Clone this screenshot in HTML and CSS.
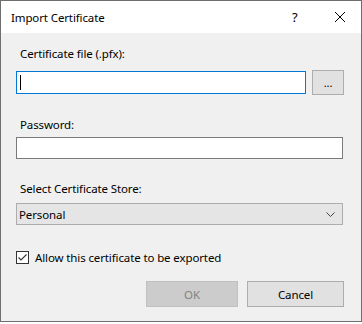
FILE: index.html
```html
<!DOCTYPE html>
<html lang="en">
<head>
    <meta charset="UTF-8">
    <meta name="viewport" content="width=device-width, initial-scale=1.0">
    <title>Import Certificate</title>
    <link rel="stylesheet" href="styles.css">
</head>
<body>
    <div class="window">
        <div class="titlebar">
            <span class="title">Import Certificate</span>
            <span class="help">?</span>
            <span class="close">
                <svg width="12" height="12" viewBox="0 0 12 12">
                    <path d="M1 1 L11 11 M11 1 L1 11" stroke="#000" stroke-width="1" fill="none"/>
                </svg>
            </span>
        </div>
        <div class="content">
            <label class="field-label">Certificate file (.pfx):</label>
            <div class="file-row">
                <div class="textbox focused"><span class="caret"></span></div>
                <button class="btn browse">...</button>
            </div>

            <label class="field-label gap">Password:</label>
            <div class="textbox wide"></div>

            <label class="field-label gap">Select Certificate Store:</label>
            <div class="select">
                <span>Personal</span>
                <svg width="9" height="5" viewBox="0 0 9 5">
                    <polyline points="0.5,0.5 4.5,4.5 8.5,0.5" stroke="#444" stroke-width="1" fill="none"/>
                </svg>
            </div>

            <div class="check-row">
                <span class="checkbox">
                    <svg width="11" height="11" viewBox="0 0 11 11">
                        <polyline points="1.5,5.5 4,8 9.5,2.5" stroke="#333" stroke-width="1.1" fill="none"/>
                    </svg>
                </span>
                <span>Allow this certificate to be exported</span>
            </div>

            <div class="buttons">
                <button class="btn ok" disabled>OK</button>
                <button class="btn cancel">Cancel</button>
            </div>
        </div>
    </div>
</body>
</html>
```

FILE: styles.css
```css
body {
    margin: 0;
    background-color: #fff;
    font-family: "Noto Sans", "Open Sans", sans-serif;
    font-size: 11.5px;
    letter-spacing: -0.12px;
    color: #000;
}
.window {
    width: 360px;
    height: 320px;
    border: 1px solid #6f6f6f;
    background-color: #f0f0f0;
}
.titlebar {
    height: 32px;
    background-color: #fff;
    display: flex;
    align-items: center;
    padding-left: 10px;
}
.title {
    flex: 1;
}
.help {
    width: 20px;
    font-size: 13px;
    margin-right: 22px;
}
.close {
    width: 27px;
    display: flex;
}
.content {
    padding: 13px 17px 0 15px;
}
.field-label {
    display: block;
    line-height: 16px;
    padding-left: 4px;
}
.field-label.gap {
    margin-top: 22px;
}
.file-row {
    display: flex;
    align-items: center;
    margin-top: 8px;
}
.textbox {
    box-sizing: border-box;
    height: 22px;
    background-color: #fff;
    border: 1px solid #7a7a7a;
}
.textbox.focused {
    width: 290px;
    height: 23px;
    border-color: #0078d7;
    display: flex;
    align-items: center;
    padding-left: 3px;
}
.textbox.wide {
    width: 327px;
    margin-top: 4px;
}
.caret {
    width: 1px;
    height: 15px;
    background-color: #000;
}
.btn {
    box-sizing: border-box;
    font-family: inherit;
    font-size: 11.5px;
    letter-spacing: -0.12px;
    background-color: #e1e1e1;
    border: 1px solid #adadad;
    color: #000;
    padding: 0;
}
.browse {
    width: 32px;
    height: 25px;
    margin-left: 6px;
    font-size: 11px;
}
.select {
    box-sizing: border-box;
    width: 327px;
    height: 22px;
    margin-top: 6px;
    background-color: #e5e5e5;
    border: 1px solid #adadad;
    display: flex;
    align-items: center;
    justify-content: space-between;
    padding: 0 7px 0 2px;
}
.check-row {
    display: flex;
    align-items: center;
    margin-top: 25px;
    height: 15px;
}
.checkbox {
    box-sizing: border-box;
    width: 13px;
    height: 13px;
    border: 1px solid #333;
    background-color: #fff;
    display: flex;
    margin-right: 6px;
}
.buttons {
    display: flex;
    justify-content: flex-end;
    gap: 9px;
    margin-top: 16px;
}
.ok {
    width: 92px;
    height: 26px;
    background-color: #cccccc;
    border-color: #bfbfbf;
    color: #838383;
}
.cancel {
    width: 97px;
    height: 26px;
}
```
